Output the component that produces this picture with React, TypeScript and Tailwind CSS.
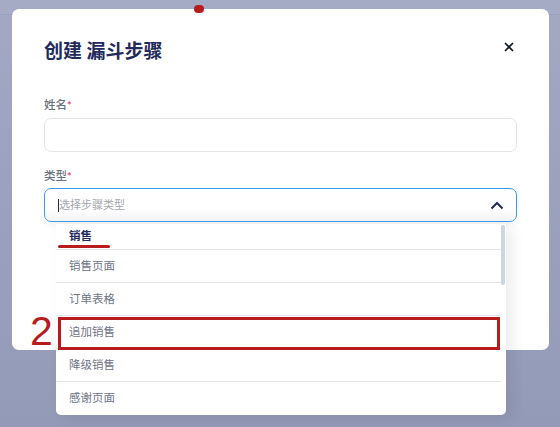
import { X } from "lucide-react";

const cjk = "font-['Inter','Noto_Sans_CJK_SC',sans-serif]";

const options = ["销售页面", "订单表格", "追加销售", "降级销售", "感谢页面"];

export default function App() {
  return (
    <div className={`relative w-[560px] h-[427px] overflow-hidden bg-gradient-to-b from-[#a3a8c3] to-[#939ab7] ${cjk}`}>
      {/* faint page strip behind the overlay */}
      <div className="h-[15px] border-b border-[#9ba0bb] bg-[#a5aac5]" />

      {/* modal */}
      <div className="absolute left-[12px] top-[9px] w-[537px] h-[341px] rounded-[7px] bg-white px-8 pt-[29px]">
        <div className="flex items-center justify-between">
          <h2 className="text-[19px] leading-[28px] font-bold text-[#1f2b5b]">创建 漏斗步骤</h2>
          <button className="mr-[1px] -mt-[10px] text-[#111827]">
            <X size={14} strokeWidth={3} />
          </button>
        </div>

        <div className="mt-[31px]">
          <label className="block text-[11.5px] leading-[16px] font-medium text-[#6b7280] mb-[5px]">
            姓名<span className="text-[#ef4470] align-top text-[9px]">*</span>
          </label>
          <div className="h-[34px] w-[473px] rounded-[7px] border border-[#e3e5e9] bg-white" />
        </div>

        <div className="mt-[16px]">
          <label className="block text-[11.5px] leading-[16px] font-medium text-[#6b7280] mb-[4px]">
            类型<span className="text-[#ef4470] align-top text-[9px]">*</span>
          </label>
          <div className="flex h-[34px] w-[473px] items-center justify-between rounded-[7px] border border-[#3d9be9] bg-gradient-to-b from-white from-60% to-[#f4f4f6] pl-[13px] pr-[12px] shadow-[0_3px_6px_rgba(0,0,0,0.06)]">
            <div className="flex items-center">
              <span className="w-[1px] h-[13px] bg-[#1f2b5b]" />
              <span className="text-[11px] text-[#a3a7b0]">选择步骤类型</span>
            </div>
            <svg width="14" height="9" viewBox="0 0 14 9" fill="none">
              <path d="M1.5 7.5 L7 2 L12.5 7.5" stroke="#1f2b5b" strokeWidth="2" />
            </svg>
          </div>
        </div>
      </div>

      {/* red dot */}
      <div className="absolute left-[194px] top-[5px] w-[10px] h-[8px] rounded-full bg-[#b91c1c]" />

      {/* dropdown */}
      <div className="absolute left-[56px] top-[224px] w-[450px] h-[191px] rounded-b-[5px] bg-white shadow-[6px_4px_14px_rgba(0,0,0,0.08)] flex">
        <div className="flex-1 flex flex-col">
          <div className="relative h-[26px] border-b border-[#e3e4e8] pl-[13px] flex items-center">
            <span className="text-[11.5px] font-bold text-[#1f2b5b]">销售</span>
            <span className="absolute left-[2px] bottom-[1px] w-[52px] h-[3px] rounded-full bg-[#b91c1c]" />
          </div>
          {options.map((o, i) => (
            <div
              key={o}
              className={`h-[33px] pl-[13px] pt-[1px] flex items-center text-[11.5px] text-[#6e7587] ${i < options.length - 1 ? "border-b border-[#e3e4e8]" : ""}`}
            >
              {o}
            </div>
          ))}
        </div>
        <div className="w-[4px] mr-[1px] pt-[1px]">
          <div className="h-[60px] w-[4px] rounded-full bg-[#ccd6e4]" />
        </div>
      </div>

      {/* annotation */}
      <div className="absolute left-[58px] top-[317px] w-[442px] h-[33px] border-[3px] border-[#b91c1c]" />
      <div className="absolute left-[30px] top-[308px] text-[41px] leading-[46px] text-[#b91c1c] font-['Liberation_Sans',sans-serif]">
        2
      </div>
    </div>
  );
}
